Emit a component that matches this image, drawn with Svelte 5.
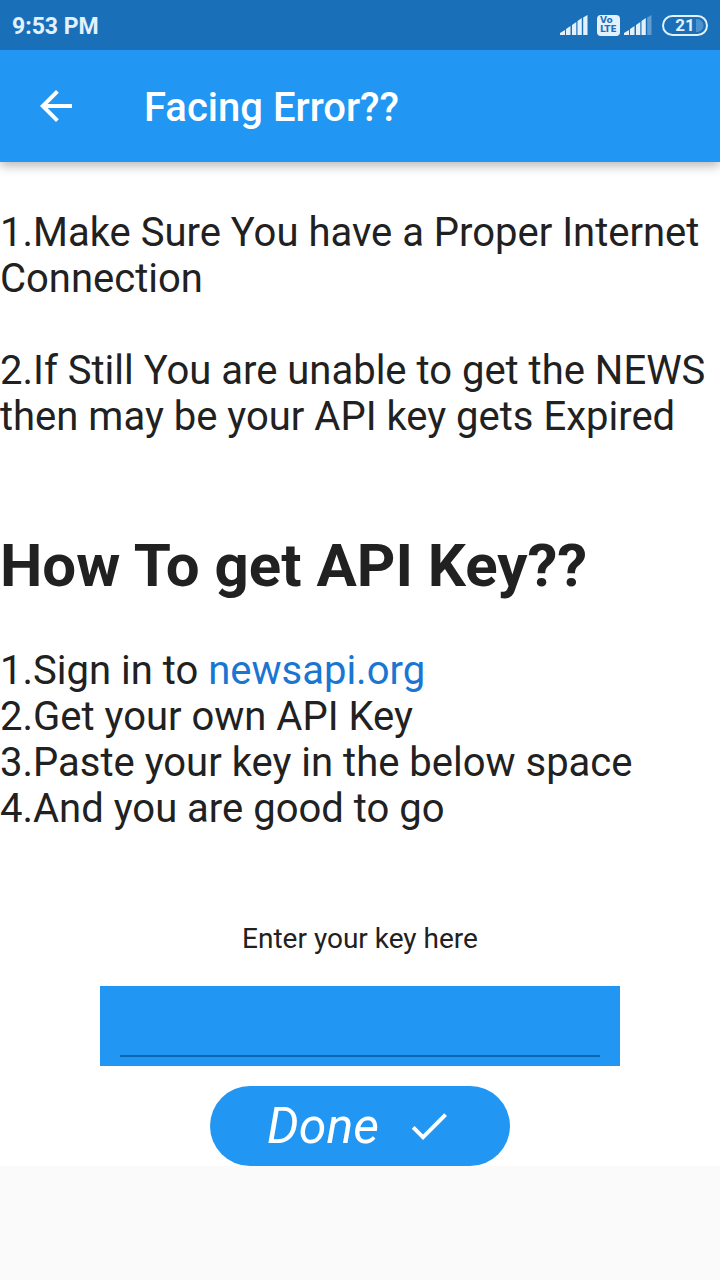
<script>
  let apiKey = $state('');
</script>

<div class="screen">
  <div class="status">
    <span class="clock">9:53 PM</span>
    <div class="indicators">
      <svg class="signal" viewBox="0 0 28 20" width="28" height="20" aria-hidden="true">
        <path d="M0 20v-2l5-3v5zM6 20v-6l4.500-3v9zM12 20V10l4.300-3v13zM17.500 20V6l4.300-3v17zM23.200 20V2.500l4.300-2.500v20z" />
      </svg>
      <div class="volte"><span>Vo</span><span>LTE</span></div>
      <svg class="signal second" viewBox="0 0 28 20" width="28" height="20" aria-hidden="true">
        <path d="M0 20v-2l5-3v5zM6 20v-6l4.500-3v9zM12 20V10l4.300-3v13zM17.500 20V6l4.300-3v17z" />
        <path d="M23.200 20V2.500l4.300-2.500v20z" opacity=".35" />
      </svg>
      <div class="battery">
        <svg viewBox="0 0 46 21" width="46" height="21" aria-hidden="true">
          <rect x="1" y="1" width="44" height="19" rx="9.500" fill="none" stroke="#e3f1fd" stroke-width="2" />
          <path d="M34 4h1a6.500 6.500 0 0 1 0 13h-1z" fill="#4a92d0" />
        </svg>
        <span>21</span>
      </div>
    </div>
  </div>

  <header>
    <button class="back" type="button" aria-label="Back">
      <svg viewBox="0 0 24 24" width="48" height="48" aria-hidden="true">
        <path d="M20 11H7.830l5.590-5.590L12 4l-8 8 8 8 1.410-1.410L7.830 13H20v-2z" />
      </svg>
    </button>
    <h1>Facing Error??</h1>
  </header>

  <main>
    <p>1.Make Sure You have a Proper Internet Connection</p>
    <p>2.If Still You are unable to get the NEWS then may be your API key gets Expired</p>
    <h2>How To get API Key??</h2>
    <div class="steps">
      <div>1.Sign in to <a href="https://newsapi.org">newsapi.org</a></div>
      <div>2.Get your own API Key</div>
      <div>3.Paste your key in the below space</div>
      <div>4.And you are good to go</div>
    </div>
    <form onsubmit={(e) => e.preventDefault()}>
      <label for="api-key">Enter your key here</label>
      <div class="field">
        <input id="api-key" type="text" autocomplete="off" bind:value={apiKey} />
      </div>
      <button class="done" type="submit">
        <span>Done</span>
        <svg viewBox="0 0 24 24" width="48" height="48" aria-hidden="true">
          <path d="M9 16.200L4.800 12l-1.400 1.400L9 19 21 7l-1.400-1.400L9 16.200z" />
        </svg>
      </button>
    </form>
  </main>
</div>

<style>
  :global(body) {
    margin: 0;
    background: #fafafa;
  }

  .screen {
    font-family: Roboto, sans-serif;
    color: #212121;
  }

  .status {
    position: relative;
    z-index: 1;
    display: flex;
    align-items: center;
    justify-content: space-between;
    height: 50px;
    padding: 0 12px;
    background: #1a70b8;
    color: #e3f1fd;
  }

  .clock {
    font-size: 23px;
    font-weight: 700;
    line-height: 28px;
    padding-top: 4px;
  }

  .indicators {
    display: flex;
    align-items: center;
  }

  .signal {
    fill: #e3f1fd;
    margin-right: 9px;
  }

  .second {
    margin: 0 10px 0 4px;
  }

  .volte {
    display: flex;
    flex-direction: column;
    align-items: flex-start;
    justify-content: center;
    box-sizing: border-box;
    width: 23px;
    height: 21px;
    padding-left: 3px;
    border-radius: 4px;
    background: #e3f1fd;
    color: #1a70b8;
    font-family: "DejaVu Sans", sans-serif;
    font-size: 9px;
    font-weight: 700;
    line-height: 9px;
  }

  .battery {
    display: grid;
    align-items: center;
    justify-items: center;
  }

  .battery > * {
    grid-area: 1 / 1;
  }

  .battery span {
    font-size: 17px;
    font-weight: 700;
    line-height: 21px;
  }

  header {
    position: relative;
    display: flex;
    align-items: center;
    gap: 32px;
    height: 112px;
    background: #2196f3;
    color: #fff;
    box-shadow: 0 4px 10px rgba(0, 0, 0, 0.28);
  }

  button {
    display: flex;
    align-items: center;
    justify-content: center;
    border: 0;
    background: #2196f3;
    color: #fff;
    font-family: inherit;
    cursor: pointer;
  }

  button svg {
    fill: currentColor;
  }

  .back {
    width: 112px;
    height: 112px;
    padding: 0;
  }

  h1 {
    margin: 0;
    font-size: 40px;
    font-weight: 500;
    line-height: 50px;
    padding-top: 4px;
  }

  main {
    padding-top: 48px;
    background: #fff;
    font-size: 40px;
    line-height: 46px;
  }

  p {
    margin: 0 0 46px;
  }

  h2 {
    margin: 91px 0 47px;
    font-size: 60px;
    font-weight: 700;
    line-height: 70px;
  }

  a {
    color: #1976d2;
    text-decoration: none;
  }

  form {
    display: flex;
    flex-direction: column;
    align-items: center;
    padding: 91px 100px 0;
  }

  label {
    font-size: 28px;
    line-height: 32px;
  }

  .field {
    display: flex;
    box-sizing: border-box;
    width: 100%;
    height: 80px;
    margin: 31px 0 20px;
    padding: 0 20px 9px;
    background: #2196f3;
  }

  input {
    flex: 1;
    min-width: 0;
    padding: 0;
    border: 0;
    border-bottom: 2px solid #0d67b0;
    border-radius: 0;
    outline: 0;
    background: transparent;
    color: #212121;
    font: inherit;
    font-size: 32px;
  }

  .done {
    gap: 26px;
    height: 80px;
    padding: 0 57px;
    border-radius: 40px;
    font-size: 50px;
    font-style: italic;
    line-height: 58px;
  }
</style>
